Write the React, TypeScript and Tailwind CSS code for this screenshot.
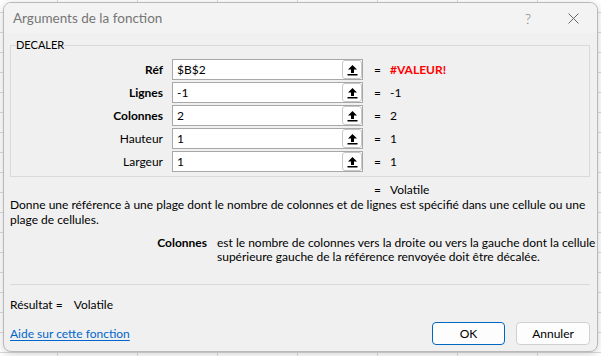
import React from 'react'

const font = { fontFamily: 'Lato, "Noto Sans", sans-serif' }

type Arg = {
  label: string
  value: string
  result: string
  bold?: boolean
  error?: boolean
}

const args: Arg[] = [
  { label: 'Réf', value: '$B$2', result: '#VALEUR!', bold: true, error: true },
  { label: 'Lignes', value: '-1', result: '-1', bold: true },
  { label: 'Colonnes', value: '2', result: '2', bold: true },
  { label: 'Hauteur', value: '1', result: '1' },
  { label: 'Largeur', value: '1', result: '1' },
]

const CollapseIcon = () => (
  <svg width="11" height="12" viewBox="0 0 11 12">
    <path d="M5.5 1 L10 5.5 H7 V9 H4 V5.5 H1 Z" fill="#000" />
    <rect x="0.5" y="10" width="10" height="1.5" fill="#000" />
  </svg>
)

const ArgRow = ({ arg }: { arg: Arg }) => (
  <div className="flex h-[21px] items-center">
    <div
      className={`w-[152px] text-right text-[12px] text-black ${
        arg.bold ? 'font-bold' : 'font-normal'
      }`}
    >
      {arg.label}
    </div>
    <div className="ml-[9px] flex h-[21px] w-[191px] items-center border border-[#a8a8a8] bg-white">
      <span className="pl-[4px] text-[12px] text-black">{arg.value}</span>
      <div className="ml-auto flex h-[19px] w-[20px] items-center justify-center rounded-[3px] border border-[#c6c6c6] bg-white">
        <CollapseIcon />
      </div>
    </div>
    <span className="ml-[11px] w-[16px] text-[12px] text-black">=</span>
    <span
      className={`text-[12px] ${
        arg.error ? 'font-bold text-[#ff0000]' : 'text-black'
      }`}
    >
      {arg.result}
    </span>
  </div>
)

export default function App() {
  return (
    <div
      style={font}
      className="h-[356px] w-[601px] overflow-hidden bg-white pt-[2px] pl-[3px] [background-image:linear-gradient(to_right,#dcdcdc_1px,transparent_1px),linear-gradient(to_bottom,#dcdcdc_1px,transparent_1px)] [background-position:57px_0,0_12px] [background-size:80px_20px]"
    >
      <div className="flex h-[350px] w-[595px] flex-col overflow-hidden rounded-[8px] border border-[#b9b9b9] bg-[#f0f0f0] shadow-[0_2px_8px_rgba(0,0,0,0.18)]">
        {/* title bar */}
        <div className="flex h-[30px] flex-none items-center bg-[#f3f3f3] pl-[9px]">
          <span className="text-[13.5px] text-[#767676]">
            Arguments de la fonction
          </span>
          <span className="ml-auto mr-[37px] text-[14px] font-light text-[#767676]">
            ?
          </span>
          <svg width="11" height="11" viewBox="0 0 11 11" className="mr-[18px]">
            <path d="M0.5 0.5 L10.5 10.5 M10.5 0.5 L0.5 10.5" stroke="#666" strokeWidth="1" />
          </svg>
        </div>

        {/* body */}
        <div className="flex flex-1 flex-col px-[6px]">
          <fieldset className="mt-[5px] mr-[1px] border border-[#d9d9d9] pt-[7px] pb-[4px]">
            <legend className="ml-[5px] px-0 text-[11px] leading-[14px] text-black">
              DECALER
            </legend>
            <div className="flex flex-col gap-[2px]">
              {args.map((a) => (
                <ArgRow key={a.label} arg={a} />
              ))}
            </div>
          </fieldset>

          <div className="mt-[5px] flex text-[12px] leading-[15px] text-black">
            <span className="ml-[364px] w-[16px]">=</span>
            <span>Volatile</span>
          </div>

          <p className="w-[582px] text-[12px] leading-[15px] text-black">
            Donne une référence à une plage dont le nombre de colonnes et de
            lignes est spécifié dans une cellule ou une plage de cellules.
          </p>

          <div className="mt-[9px] flex text-[12px] leading-[14px] text-black">
            <span className="w-[207px] flex-none pr-[10px] text-right font-bold">
              Colonnes
            </span>
            <p className="w-[382px] flex-none">
              est le nombre de colonnes vers la droite ou vers la gauche dont la
              cellule supérieure gauche de la référence renvoyée doit être
              décalée.
            </p>
          </div>

          <div className="mt-[20px] mr-[1px] border-t border-[#d9d9d9]" />

          <div className="mt-[12px] flex text-[12px] leading-[15px] text-black">
            <span>Résultat =</span>
            <span className="ml-[11px]">Volatile</span>
          </div>

          <div className="mt-[10px] flex items-center pr-[1px]">
            <a
              href="#"
              className="text-[12px] text-[#0066cc] underline underline-offset-2"
            >
              Aide sur cette fonction
            </a>
            <button className="ml-auto h-[23px] w-[73px] rounded-[4px] border border-[#0067c0] bg-[#fdfdfd] text-[12px] text-black">
              OK
            </button>
            <button className="ml-[11px] h-[23px] w-[74px] rounded-[4px] border border-[#d0d0d0] bg-[#fdfdfd] text-[12px] text-black">
              Annuler
            </button>
          </div>
        </div>
      </div>
    </div>
  )
}
